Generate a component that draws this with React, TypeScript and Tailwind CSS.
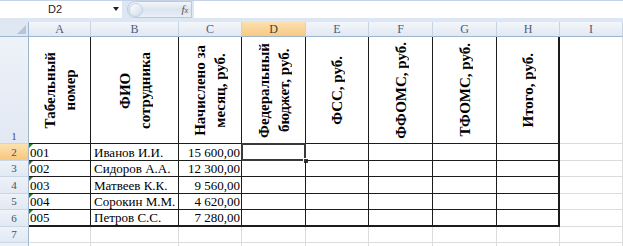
import React from "react";

type Row = {
  num: number;
  h: string;
  a?: string;
  b?: string;
  c?: string;
};

const dataRows: Row[] = [
  { num: 2, h: "h-[17px]", a: "001", b: "Иванов И.И.", c: "15 600,00" },
  { num: 3, h: "h-[16px]", a: "002", b: "Сидоров А.А.", c: "12 300,00" },
  { num: 4, h: "h-[17px]", a: "003", b: "Матвеев К.К.", c: "9 560,00" },
  { num: 5, h: "h-[16px]", a: "004", b: "Сорокин М.М.", c: "4 620,00" },
  { num: 6, h: "h-[17px]", a: "005", b: "Петров С.С.", c: "7 280,00" },
];

const letters = ["A", "B", "C", "D", "E", "F", "G", "H", "I"];

const headers: string[][] = [
  ["Табельный", "номер"],
  ["ФИО", "сотрудника"],
  ["Начислено за", "месяц, руб."],
  ["Федеральный", "бюджет, руб."],
  ["ФСС, руб."],
  ["ФФОМС, руб."],
  ["ТФОМС, руб."],
  ["Итого, руб."],
];

const gridCols =
  "grid grid-cols-[29px_62px_88px_63px_64px_63px_64px_64px_63px_63px]";

// border classes for a table cell (cols A..H, rows 1..6)
const tableCell = (col: number, lastRow: boolean) =>
  [
    col === 7 ? "border-r-2" : "border-r",
    lastRow ? "border-b-2" : "border-b",
    "border-[#1c1c1c]",
  ].join(" ");

const RowHead = ({ n, active, bottom }: { n?: number; active?: boolean; bottom?: boolean }) => (
  <div
    className={`flex justify-center ${bottom ? "items-end pb-[1px]" : "items-center"} border-r border-b border-r-[#9eb6ce] border-b-[#c9d6e6] text-[11px] leading-none text-[#3e4f6c] ${
      active
        ? "bg-gradient-to-b from-[#fce2b0] to-[#f7c77c]"
        : "bg-gradient-to-b from-[#eef2f9] to-[#e2e9f3]"
    }`}
  >
    {n}
  </div>
);

const App = () => {
  return (
    <div className="w-[623px] h-[246px] overflow-hidden bg-white font-['Liberation_Serif','Times_New_Roman',serif]">
      {/* formula bar */}
      <div className="flex h-[22px] bg-[#dde7f3] border-t border-[#c4d3e6] pb-[4px]">
        <div className="relative w-[122px] bg-white flex items-center">
          <span className="w-[110px] text-center font-['Liberation_Sans',sans-serif] text-[11px] text-[#222]">
            D2
          </span>
          <span className="absolute right-[3px] top-[6px] w-0 h-0 border-l-[3px] border-r-[3px] border-t-[4px] border-l-transparent border-r-transparent border-t-[#222]" />
        </div>
        <div className="w-[5px] bg-[#dde7f3]" />
        <div className="relative w-[65px] rounded-l-full bg-gradient-to-b from-[#f4f7fb] via-[#dbe4ef] to-[#e9eff7] border border-[#b9c9dd] flex items-center justify-end pr-[3px]">
          <span className="absolute left-[1px] top-[1px] w-[14px] h-[14px] rounded-full bg-gradient-to-br from-white to-[#cfdbea] border border-[#c3d1e2]" />
          <span className="italic text-[11px] text-[#555] leading-none">
            f<span className="text-[8px]">x</span>
          </span>
        </div>
        <div className="w-[2px]" />
        <div className="flex-1 bg-white" />
      </div>

      {/* column headers */}
      <div className={`${gridCols} h-[15px]`}>
        <div className="relative bg-[#dfe7f2] border-r border-b border-r-[#9eb6ce] border-b-[#9eb6ce]">
          <span className="absolute right-[2px] bottom-[2px] w-0 h-0 border-l-[9px] border-t-[9px] border-l-transparent border-t-transparent border-b-0 border-r-0 [border-bottom:9px_solid_#b4c5da]" />
        </div>
        {letters.map((l) => (
          <div
            key={l}
            className={`flex items-center justify-center text-[12px] leading-none border-r border-b border-r-[#c6d3e3] border-b-[#9eb6ce] ${
              l === "D"
                ? "bg-gradient-to-b from-[#fbe0ae] to-[#f8c982] text-[#3f3f3f]"
                : "bg-gradient-to-b from-[#f3f6fb] to-[#e1e8f2] text-[#4a5d7c]"
            }`}
          >
            {l}
          </div>
        ))}
      </div>

      {/* row 1 - headers */}
      <div className={`${gridCols} h-[107px]`}>
        <RowHead n={1} bottom />
        {headers.map((lines, i) => (
          <div
            key={i}
            className={`flex items-center justify-center ${tableCell(i, false)}`}
          >
            <div className="[writing-mode:vertical-rl] rotate-180 text-center font-['Liberation_Serif','Times_New_Roman',serif] font-bold text-[15px] leading-[20px] text-black">
              {lines.map((t) => (
                <div key={t}>{t}</div>
              ))}
            </div>
          </div>
        ))}
        <div className="border-r border-b border-[#dadcdd]" />
      </div>

      {/* data rows */}
      {dataRows.map((r, ri) => {
        const last = ri === dataRows.length - 1;
        return (
          <div key={r.num} className={`${gridCols} ${r.h}`}>
            <RowHead n={r.num} active={r.num === 2} />
            <div className={`relative flex items-center pl-[1px] text-[13px] leading-none ${tableCell(0, last)}`}>
              <span className="absolute left-0 top-0 w-0 h-0 border-t-[4px] border-r-[4px] border-t-[#1a8a1a] border-r-transparent" />
              {r.a}
            </div>
            <div className={`flex items-center pl-[3px] text-[13px] leading-none whitespace-nowrap ${tableCell(1, last)}`}>
              {r.b}
            </div>
            <div className={`flex items-center justify-end pr-[1px] text-[13px] leading-none whitespace-nowrap ${tableCell(2, last)}`}>
              {r.c}
            </div>
            {[3, 4, 5, 6, 7].map((c) => (
              <div key={c} className={`relative ${tableCell(c, last)}`}>
                {r.num === 2 && c === 3 && (
                  <>
                    <span className="absolute -left-[1px] -top-[1px] -right-[1px] -bottom-[1px] border-2 border-[#3a3a3a]" />
                    <span className="absolute -right-[4px] -bottom-[4px] w-[6px] h-[6px] bg-[#3a3a3a] border border-white" />
                  </>
                )}
              </div>
            ))}
            <div className="border-r border-b border-[#dadcdd]" />
          </div>
        );
      })}

      {/* rows 7-8 */}
      {[7, 8].map((n) => (
        <div key={n} className={`${gridCols} h-[16px]`}>
          <RowHead n={n === 7 ? n : undefined} />
          {letters.map((l) => (
            <div key={l} className="border-r border-b border-[#dadcdd]" />
          ))}
        </div>
      ))}
    </div>
  );
};

export default App;
